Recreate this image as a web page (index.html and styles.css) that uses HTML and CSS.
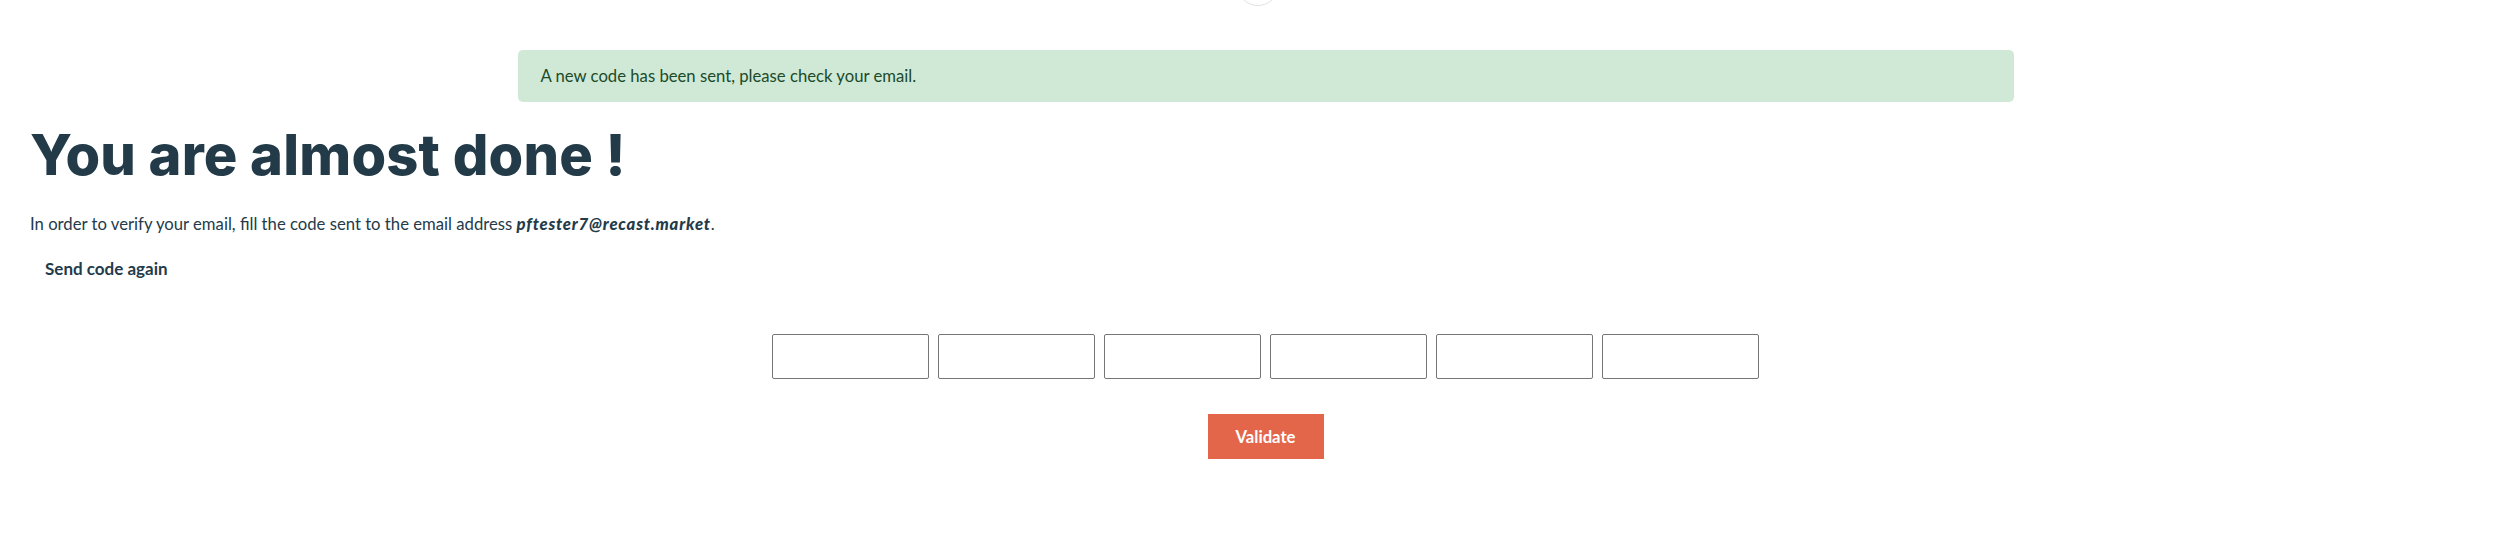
FILE: index.html
```html
<!DOCTYPE html>
<html lang="en">
<head>
    <meta charset="UTF-8">
    <meta name="viewport" content="width=device-width, initial-scale=1.0">
    <title>Verify your email</title>
    <link rel="stylesheet" href="styles.css">
</head>
<body>

    <!-- loader peeking from the top -->
    <div class="loader"></div>

    <div class="notice-row">
        <div class="notice">A new code has been sent, please check your email.</div>
    </div>

    <div class="content">
        <h1>You are almost done !</h1>
        <p class="intro">In order to verify your email, fill the code sent to the email address <strong>pftester7@recast.market</strong>.</p>
        <button class="resend" type="button">Send code again</button>
    </div>

    <form class="code-form">
        <div class="code-inputs">
            <input type="text" maxlength="1" class="code-input">
            <input type="text" maxlength="1" class="code-input">
            <input type="text" maxlength="1" class="code-input">
            <input type="text" maxlength="1" class="code-input">
            <input type="text" maxlength="1" class="code-input">
            <input type="text" maxlength="1" class="code-input">
        </div>
        <button class="validate" type="submit">Validate</button>
    </form>

</body>
</html>
```

FILE: styles.css
```css
body {
    margin: 0;
    font-family: Lato, "Noto Sans", sans-serif;
    font-size: 16.7px;
    color: #243b4a;
    background-color: #fff;
}

.loader {
    width: 40px;
    height: 40px;
    margin: -36px auto 0;
    border: 1px solid #e2e2e2;
    border-radius: 50%;
    position: relative;
    left: -2px;
}

.notice-row {
    display: flex;
    justify-content: center;
    padding-left: 12px;
    margin-top: 44px;
}

.notice {
    width: 1496px;
    height: 52px;
    box-sizing: border-box;
    padding: 0 23px;
    display: flex;
    align-items: center;
    background-color: #cfe9d6;
    color: #1c4b2a;
    border-radius: 5px;
    font-size: 16.7px;
}

.content {
    padding: 0 30px;
}

h1 {
    font-family: Inter, "Noto Sans", sans-serif;
    font-weight: 800;
    font-size: 56px;
    letter-spacing: 0.2px;
    line-height: 66px;
    margin: 20px 0 0;
    color: #233a48;
}

.intro {
    margin: 24px 0 0;
    line-height: 24px;
}

.intro strong {
    font-style: italic;
    font-weight: 900;
    letter-spacing: 0.8px;
}

.resend {
    margin: 18px 0 0 0;
    padding: 4px 15px;
    border: none;
    background: none;
    font-family: Lato, "Noto Sans", sans-serif;
    font-size: 17px;
    font-weight: 700;
    color: #243b4a;
    cursor: pointer;
}

.code-form {
    display: flex;
    flex-direction: column;
    align-items: center;
    padding-left: 12px;
    margin-top: 51px;
}

.code-inputs {
    display: flex;
    gap: 9px;
}

.code-input {
    width: 157px;
    height: 45px;
    box-sizing: border-box;
    border: 1px solid #767676;
    border-radius: 2px;
    font-size: 18px;
    text-align: center;
}

.validate {
    margin-top: 35px;
    width: 116px;
    height: 45px;
    border: none;
    background-color: #e4664a;
    color: #fff;
    font-family: Lato, "Noto Sans", sans-serif;
    font-size: 16.7px;
    font-weight: 700;
    cursor: pointer;
}
```
